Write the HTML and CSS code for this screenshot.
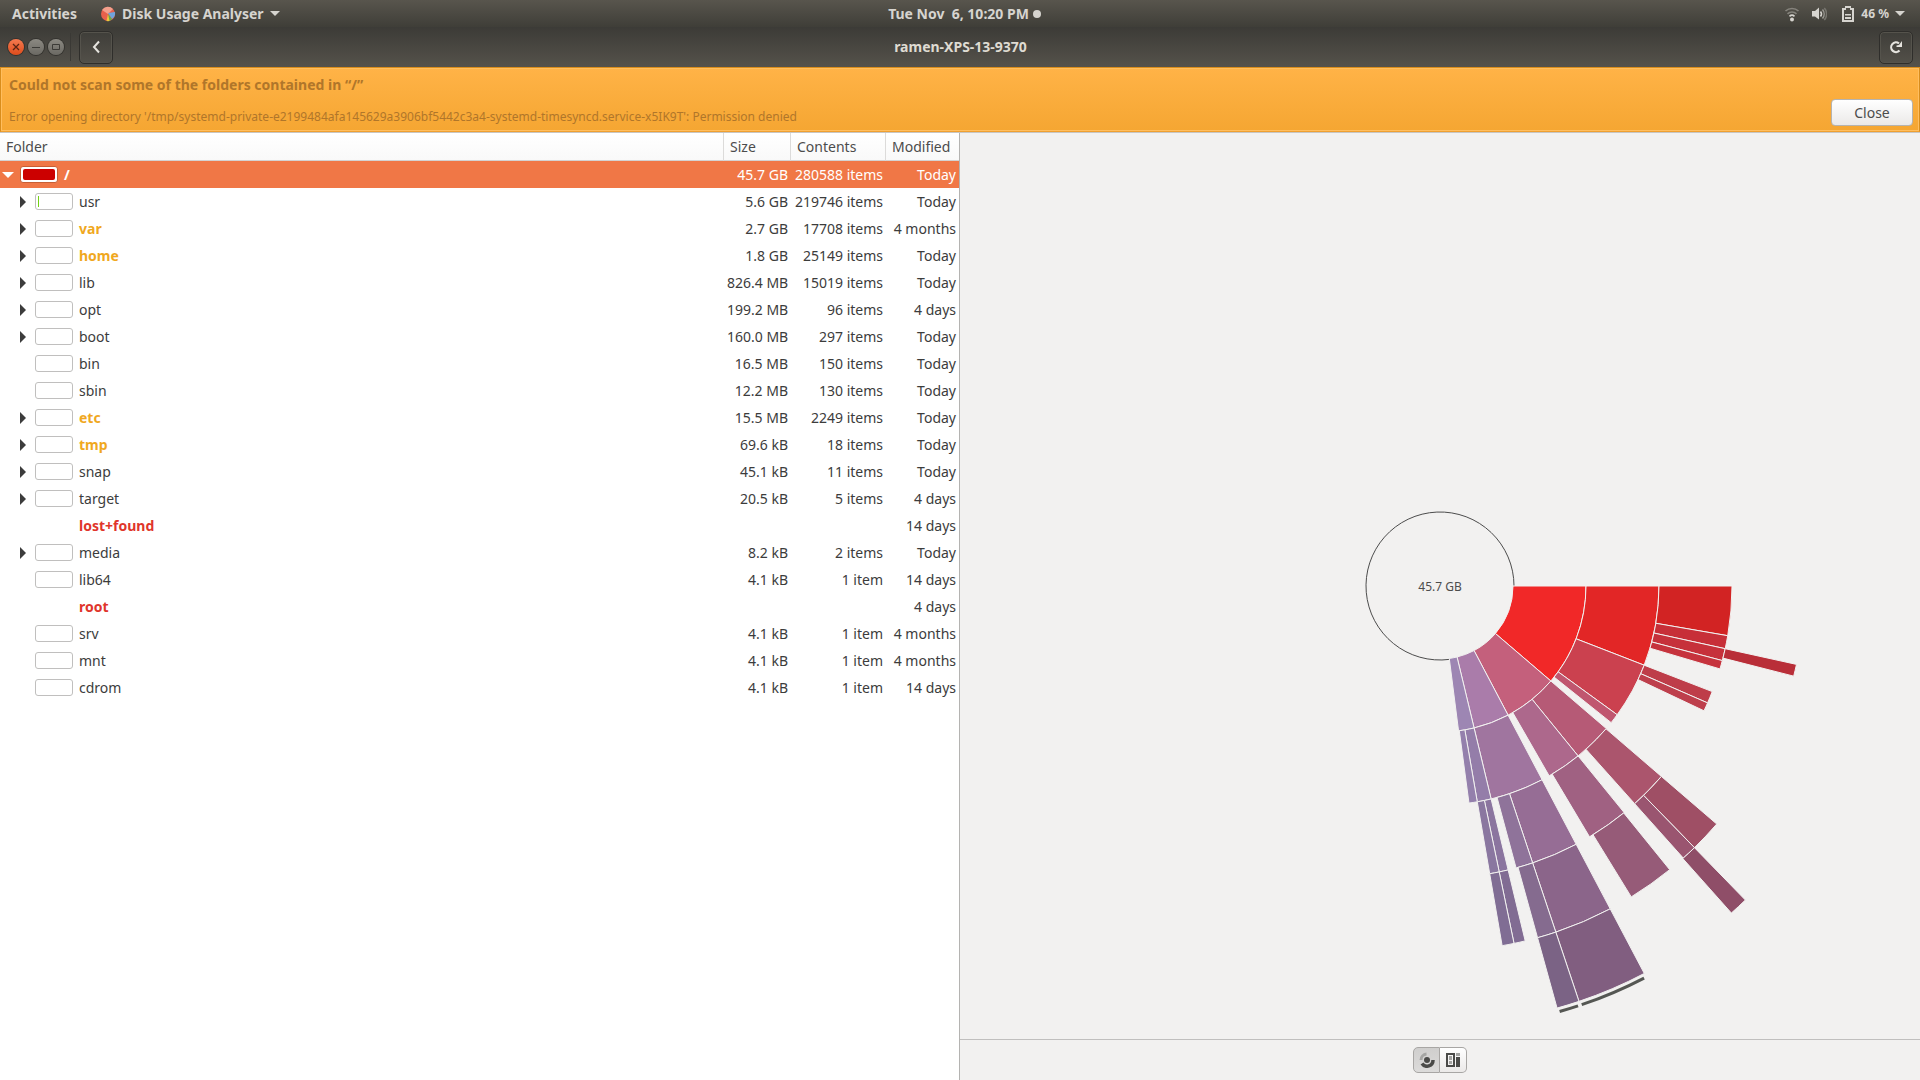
FILE: index.html
```html
<!DOCTYPE html>
<html lang="en">
<head>
    <meta charset="UTF-8">
    <meta name="viewport" content="width=device-width, initial-scale=1.0">
    <title>Disk Usage Analyser</title>
    <link rel="stylesheet" href="styles.css">
</head>
<body>
    <div class="top-bar">
        <div class="top-left">
            <button class="top-item">Activities</button>
            <button class="top-item app-menu">
                <svg class="app-icon" width="16" height="16" viewBox="0 0 16 16">
                    <circle cx="8" cy="8" r="7" fill="#e8604c"/>
                    <path d="M8 8L2 4A7 7 0 0 1 13 3Z" fill="#f3a08c"/>
                    <path d="M8 7L15 6A7 7 0 0 1 12 13Z" fill="#6fa3dc"/>
                    <path d="M8 8L12 13A7 7 0 0 1 9 15Z" fill="#5fb04a"/>
                    <path d="M8 8L9.500 15A7 7 0 0 1 6.500 15Z" fill="#f0c53c"/>
                </svg>
                Disk Usage Analyser
                <span class="caret"></span>
            </button>
        </div>
        <button class="top-item clock">Tue Nov &nbsp;6, 10:20 PM<span class="dot"></span></button>
        <button class="top-item status" aria-label="System menu, battery 46 %">
            <svg width="16" height="16" viewBox="0 0 16 16" fill="none" stroke="#d6d4cf" stroke-width="1.600">
                <path d="M1.500 5a9.500 9.500 0 0 1 13 0" stroke="#85837c"/>
                <path d="M3.500 7.800a6.500 6.500 0 0 1 9 0" stroke="#85837c"/>
                <path d="M5.500 10.300a3.700 3.700 0 0 1 5 0"/>
                <circle cx="8" cy="13.500" r="2" fill="#d6d4cf" stroke="none"/>
            </svg>
            <svg width="16" height="16" viewBox="0 0 16 16" fill="none" stroke-width="1.500">
                <path d="M1 5h3l4-3.500v12L4 10.500H1Z" fill="#d6d4cf"/>
                <path d="M9.500 5.500a4 4 0 0 1 0 5" stroke="#d6d4cf"/>
                <path d="M11.500 3.500a7 7 0 0 1 0 9" stroke="#9a9891"/>
                <path d="M13.300 2a9 9 0 0 1 0 12" stroke="#77756e"/>
            </svg>
            <svg class="battery" width="12" height="16" viewBox="0 0 12 16">
                <path d="M3 0h6v2h3v14H0V2h3ZM2 4v10h8V4H8V2H4v2Z" fill="#d6d4cf" fill-rule="evenodd"/>
                <path d="M3 8h6v1.500H3ZM3 11h6v2H3Z" fill="#d6d4cf"/>
            </svg>
            <span>46 %</span>
            <span class="caret"></span>
        </button>
    </div>

    <header class="title-bar">
        <div class="title-left">
            <button class="win-btn win-close" aria-label="Close window">
                <svg width="16" height="16" viewBox="0 0 16 16"><path d="M5 5l6 6M11 5l-6 6" stroke="#5a2413" stroke-width="1.300"/></svg>
            </button>
            <button class="win-btn" aria-label="Minimise">
                <svg width="16" height="16" viewBox="0 0 16 16"><path d="M4 8.500h8" stroke="#3c3b37"/></svg>
            </button>
            <button class="win-btn" aria-label="Maximise">
                <svg width="16" height="16" viewBox="0 0 16 16"><path d="M4.500 5.500h7v5h-7z" fill="none" stroke="#3c3b37"/></svg>
            </button>
            <span class="separator"></span>
            <button class="tool-btn" aria-label="Back">
                <svg width="16" height="16" viewBox="0 0 16 16"><path d="M11 2.500L6 8l5 5.500" fill="none" stroke="#e6e4df" stroke-width="2"/></svg>
            </button>
        </div>
        <h1>ramen-XPS-13-9370</h1>
        <button class="tool-btn reload" aria-label="Rescan">
            <svg width="16" height="16" viewBox="0 0 16 16"><path d="M11.500 11.500A4.800 4.800 0 1 1 11 4.500" fill="none" stroke="#e6e4df" stroke-width="2.200"/><path d="M14 2v6H8.500V6.500L11 6Z" fill="#e6e4df"/></svg>
        </button>
    </header>

    <div class="info-bar">
        <div class="info-text">
            <h2>Could not scan some of the folders contained in “/”</h2>
            <p>Error opening directory '/tmp/systemd-private-e2199484afa145629a3906bf5442c3a4-systemd-timesyncd.service-x5IK9T': Permission denied</p>
        </div>
        <button class="close-btn">Close</button>
    </div>

    <main>
        <section class="folders">
            <table>
                <thead>
                    <tr>
                        <th>Folder</th>
                        <th class="col-size">Size</th>
                        <th class="col-contents">Contents</th>
                        <th class="col-modified">Modified</th>
                    </tr>
                </thead>
                <tbody id="folderRows">
                    <!-- Rows are added by chart.js -->
                </tbody>
            </table>
        </section>
        <section class="chart-pane">
            <svg id="chart" class="chart" viewBox="-480 -453 960 906" role="img" aria-label="Rings chart">
                <text class="chart-label" x="0" y="5">45.7 GB</text>
            </svg>
            <div class="view-bar">
                <button class="view-btn active" aria-label="Rings chart">
                    <svg width="16" height="16" viewBox="0 0 16 16" fill="none">
                        <path d="M2 8A6 6 0 0 1 7.500 2" stroke="#a5a5a3" stroke-width="3"/>
                        <path d="M14 8A6 6 0 0 1 3 11.500" stroke="#4a4a48" stroke-width="3.500"/>
                        <circle cx="8" cy="8" r="3" fill="#4a4a48"/>
                    </svg>
                </button>
                <button class="view-btn" aria-label="Treemap chart">
                    <svg width="16" height="16" viewBox="0 0 16 16">
                        <path d="M1 1h9v14H1ZM3 3v10h5V3Z" fill="#4a4a48" fill-rule="evenodd"/>
                        <path d="M4 4h3v4H4ZM4 9h3v3H4ZM11 1h4v3h-4Z" fill="#a5a5a3"/>
                        <path d="M11 5h4v10h-4Z" fill="#4a4a48"/>
                    </svg>
                </button>
            </div>
        </section>
    </main>

    <script src="chart.js"></script>
</body>
</html>
```
FILE: styles.css
```css
* {
    box-sizing: border-box;
}
body {
    margin: 0;
    height: 100vh;
    display: flex;
    flex-direction: column;
    font-family: "Noto Sans", "Open Sans", sans-serif;
    font-size: 14px;
    line-height: 20px;
    color: #3c3c3c;
    background-color: #f2f1f0;
}
button {
    font: inherit;
    color: inherit;
    padding: 0;
    border: none;
    background: none;
}
svg {
    display: block;
}

/* Desktop panel */
.top-bar {
    height: 27px;
    display: grid;
    grid-template-columns: 1fr auto 1fr;
    align-items: center;
    padding: 0 15px 0 12px;
    background: linear-gradient(#58554d, #3f3e38);
    color: #d6d4cf;
    font-weight: bold;
}
.top-left {
    display: flex;
    gap: 23px;
}
.top-item {
    display: flex;
    align-items: center;
    gap: 6px;
}
.caret {
    border: 5px solid transparent;
    border-top-color: #d6d4cf;
    border-bottom: none;
}
.dot {
    width: 8px;
    height: 8px;
    border-radius: 50%;
    background-color: #d6d4cf;
}
.clock {
    gap: 4px;
    padding-left: 12px;
}
.status {
    justify-self: end;
    font-size: 12px;
}
.status svg {
    margin-right: 5px;
}
.status .battery {
    margin: 0 1px 0 4px;
}

/* Window header */
.title-bar {
    height: 40px;
    display: grid;
    grid-template-columns: 1fr auto 1fr;
    align-items: center;
    padding: 0 7px 0 8px;
    background: linear-gradient(#3c3b37, #55524b);
    color: #dfdbd2;
}
.title-bar h1 {
    margin: 0;
    font-size: 14px;
}
.title-left {
    display: flex;
    align-items: center;
    gap: 4px;
}
.win-btn {
    width: 16px;
    height: 16px;
    border-radius: 50%;
    background: linear-gradient(#8b8982, #6b6963);
    box-shadow: 0 0 0 1px #33322e;
}
.win-close {
    background: linear-gradient(#f47a50, #df4c1b);
}
.separator {
    width: 1px;
    height: 28px;
    margin: 0 4px 0 2px;
    background-color: #3a3935;
}
.tool-btn {
    width: 34px;
    height: 33px;
    display: flex;
    align-items: center;
    justify-content: center;
    border: 1px solid #2f2e2b;
    border-radius: 5px;
    box-shadow: inset 0 0 0 1px #55534c;
}
.reload {
    justify-self: end;
}

/* Warning */
.info-bar {
    display: flex;
    justify-content: space-between;
    align-items: flex-end;
    height: 65px;
    padding: 7px 6px 5px 8px;
    border: 1px solid #d98d1c;
    border-bottom-color: #f0a030;
    background: linear-gradient(#ffb347, #f5a632);
    box-shadow: inset 0 0 0 1px #ffbe5f;
    color: #b0762a;
}
.info-text {
    align-self: flex-start;
}
.info-text h2 {
    margin: 0 0 12px;
    font-size: 14px;
    line-height: 20px;
}
.info-text p {
    margin: 0;
    font-size: 12px;
    line-height: 20px;
}
.close-btn {
    width: 82px;
    height: 27px;
    border: 1px solid #b5b3b0;
    border-radius: 4px;
    background: linear-gradient(#ffffff, #ebe9e8);
    color: #4c4c4c;
}

main {
    flex: 1;
    min-height: 0;
    display: flex;
    border-top: 1px solid #c8c6c3;
}
.folders {
    width: 50%;
    border-right: 1px solid #b4b3b1;
    background-color: #ffffff;
}
table {
    width: 100%;
    table-layout: fixed;
    border-collapse: separate;
    border-spacing: 0;
}
th {
    height: 28px;
    padding: 0 6px;
    border-bottom: 1px solid #d4d3d2;
    border-right: 1px solid #dcdbda;
    background: linear-gradient(#ffffff, #f9f9f9);
    font-weight: normal;
    text-align: left;
    color: #4c4c4c;
}
th:last-child {
    border-right: none;
}
.col-size {
    width: 67px;
}
.col-contents {
    width: 95px;
}
.col-modified {
    width: 73px;
}
td {
    height: 27px;
    padding: 0 3px;
    text-align: right;
    white-space: nowrap;
}
.folder {
    display: flex;
    align-items: center;
    gap: 6px;
    padding-left: 14px;
}
.expander {
    width: 12px;
    height: 12px;
    display: flex;
    justify-content: center;
    align-items: center;
}
.expander::before {
    content: "";
    border: 6px solid transparent;
    border-left-color: #3c3c3c;
    border-right: none;
}
.leaf {
    visibility: hidden;
}
.bar {
    width: 38px;
    height: 17px;
    padding: 2px;
    border: 1px solid #c0bfbe;
    border-radius: 3px;
    background-color: #ffffff;
}
.bar-fill {
    display: block;
    height: 100%;
    background-color: #73d216;
}
.no-bar {
    visibility: hidden;
}
.warning .name {
    font-weight: bold;
    color: #f0a81e;
}
.error .name {
    font-weight: bold;
    color: #e0352b;
}
.selected {
    background-color: #f07746;
    color: #ffffff;
}
.selected .folder {
    margin-left: -1px;
    padding-left: 0;
}
.selected .name {
    font-weight: bold;
}
.selected .expander::before {
    border: 6px solid transparent;
    border-top-color: #ffffff;
    border-bottom: none;
}
.selected .bar {
    border-color: #c85f35;
}
.selected .bar-fill {
    border-radius: 2px;
    background-color: #cc0000;
}

.chart-pane {
    width: 50%;
    display: flex;
    flex-direction: column;
}
.chart {
    flex: 1;
    min-height: 0;
    width: 100%;
}
.chart path {
    stroke: #f2f1f0;
    stroke-width: 1;
}
.chart .outline {
    fill: none;
    stroke: #4c4c4c;
}
.chart .more {
    fill: none;
    stroke: #555753;
    stroke-width: 3;
}
.chart-label {
    font-size: 12px;
    text-anchor: middle;
    fill: #4c4c4c;
}
.view-bar {
    height: 41px;
    display: flex;
    justify-content: center;
    align-items: center;
    border-top: 1px solid #c0bfbe;
}
.view-btn {
    width: 27px;
    height: 26px;
    display: flex;
    align-items: center;
    justify-content: center;
    border: 1px solid #a8a6a4;
    border-left: none;
    border-radius: 0 5px 5px 0;
    background: linear-gradient(#ffffff, #ebe9e8);
}
.view-btn.active {
    border-left: 1px solid #a8a6a4;
    border-radius: 5px 0 0 5px;
    background: linear-gradient(#cfcecd, #dcdbda);
}
```
FILE: chart.js
```js
// name, size, contents, modified, expandable, state, usage
const folders = [
    ['/', '45.7 GB', '280588 items', 'Today', true, 'selected', 100],
    ['usr', '5.6 GB', '219746 items', 'Today', true, '', 4],
    ['var', '2.7 GB', '17708 items', '4 months', true, 'warning'],
    ['home', '1.8 GB', '25149 items', 'Today', true, 'warning'],
    ['lib', '826.4 MB', '15019 items', 'Today', true, ''],
    ['opt', '199.2 MB', '96 items', '4 days', true, ''],
    ['boot', '160.0 MB', '297 items', 'Today', true, ''],
    ['bin', '16.5 MB', '150 items', 'Today', false, ''],
    ['sbin', '12.2 MB', '130 items', 'Today', false, ''],
    ['etc', '15.5 MB', '2249 items', 'Today', true, 'warning'],
    ['tmp', '69.6 kB', '18 items', 'Today', true, 'warning'],
    ['snap', '45.1 kB', '11 items', 'Today', true, ''],
    ['target', '20.5 kB', '5 items', '4 days', true, ''],
    ['lost+found', '', '', '14 days', false, 'error'],
    ['media', '8.2 kB', '2 items', 'Today', true, ''],
    ['lib64', '4.1 kB', '1 item', '14 days', false, ''],
    ['root', '', '', '4 days', false, 'error'],
    ['srv', '4.1 kB', '1 item', '4 months', false, ''],
    ['mnt', '4.1 kB', '1 item', '4 months', false, ''],
    ['cdrom', '4.1 kB', '1 item', '14 days', false, '']
];

const folderRows = document.getElementById('folderRows');
folders.forEach(([name, size, contents, modified, expandable, state, usage]) => {
    const row = document.createElement('tr');
    row.className = state;
    row.innerHTML = `
        <td>
            <div class="folder">
                <button class="expander ${expandable ? '' : 'leaf'}" aria-label="Expand ${name}"></button>
                <span class="bar ${size ? '' : 'no-bar'}"><span class="bar-fill" style="width: ${usage || 0}%"></span></span>
                <span class="name">${name}</span>
            </div>
        </td>
        <td>${size}</td>
        <td>${contents}</td>
        <td>${modified}</td>
    `;
    folderRows.appendChild(row);
});

// ring, start angle, end angle, colour
const sectors = [
    [1, 0, 40.6, '#f12828'], [1, 40.6, 62.2, '#c4607c'], [1, 62.2, 76.5, '#aa7caa'], [1, 76.5, 82.7, '#9d86b3'],
    [2, 0, 21.2, '#e22626'], [2, 21.2, 36, '#cb414f'], [2, 36, 38.6, '#c0566f'],
    [2, 40.6, 50.9, '#b65a76'], [2, 50.9, 60.1, '#ad688c'],
    [2, 62.2, 76.5, '#a0759f'], [2, 76.5, 80.2, '#947da9'], [2, 80.2, 82.4, '#9480ac'],
    [3, 0, 9.8, '#d22323'], [3, 9.8, 12.4, '#c72f38'], [3, 12.4, 14.8, '#c6313b'], [3, 14.8, 16.5, '#c6333d'],
    [3, 21.2, 23.6, '#be3d49'], [3, 23.6, 25.3, '#be3f4c'],
    [3, 40.7, 48.2, '#ab556d'], [3, 50.9, 59.2, '#a06182'],
    [3, 62.2, 71.5, '#966d95'], [3, 71.5, 74.9, '#8f739a'], [3, 76.5, 78.3, '#8b759f'], [3, 78.3, 80.2, '#8a77a0'],
    [4, 12.4, 14.3, '#b92e38'], [4, 40.7, 45.8, '#9f4f65'], [4, 45.8, 48.2, '#9a5570'], [4, 51, 58.4, '#965b78'],
    [4, 62.2, 71.5, '#8b658a'], [4, 71.5, 74.5, '#856b8f'], [4, 76.5, 78.3, '#816c93'], [4, 78.3, 80.2, '#806d94'],
    [5, 45.8, 48.3, '#8f4e68'], [5, 62.2, 71.5, '#815e80'], [5, 71.5, 74.5, '#7b6385']
];
const ringWidth = 73;
const chart = document.getElementById('chart');

function point(radius, angle) {
    const a = angle * Math.PI / 180;
    return `${(radius * Math.cos(a)).toFixed(2)} ${(radius * Math.sin(a)).toFixed(2)}`;
}

function addPath(d, className, fill) {
    const path = document.createElementNS('http://www.w3.org/2000/svg', 'path');
    path.setAttribute('d', d);
    if (className) path.setAttribute('class', className);
    if (fill) path.setAttribute('fill', fill);
    chart.appendChild(path);
}

function addArc(radius, start, end, className) {
    const large = end - start > 180 ? 1 : 0;
    addPath(`M${point(radius, start)}A${radius} ${radius} 0 ${large} 1 ${point(radius, end)}`, className);
}

addArc(74, 82.7, 360, 'outline');
sectors.forEach(([ring, start, end, colour]) => {
    const inner = ring * ringWidth;
    const outer = inner + ringWidth;
    addPath(`M${point(inner, start)}L${point(outer, start)}A${outer} ${outer} 0 0 1 ${point(outer, end)}` +
        `L${point(inner, end)}A${inner} ${inner} 0 0 0 ${point(inner, start)}Z`, '', colour);
});

// folders deeper than the last ring
addArc(442, 62.5, 71.3, 'more');
addArc(442, 71.8, 74.3, 'more');
```
